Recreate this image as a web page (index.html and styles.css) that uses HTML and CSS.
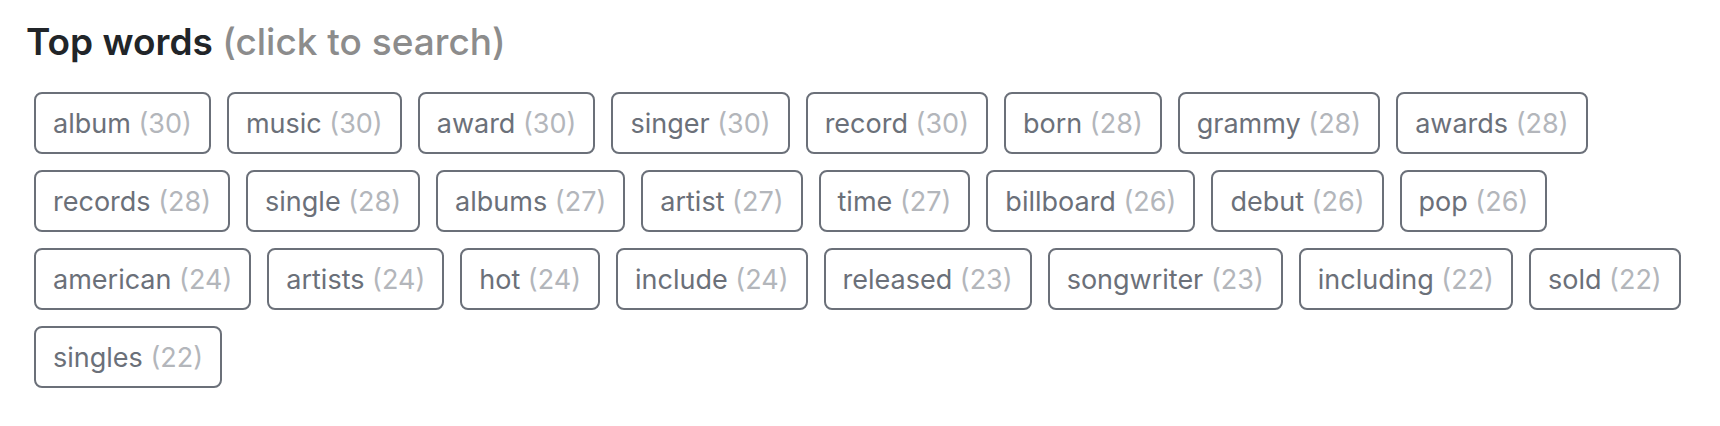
FILE: index.html
```html
<!DOCTYPE html>
<html>
<head>
<meta charset="utf-8">
<link rel="stylesheet" href="styles.css">
</head>
<body>
<div class="panel">
  <h2 class="title">Top words <span class="hint">(click to search)</span></h2>
  <div class="words">
    <button class="word">album <span class="count">(30)</span></button>
    <button class="word">music <span class="count">(30)</span></button>
    <button class="word">award <span class="count">(30)</span></button>
    <button class="word">singer <span class="count">(30)</span></button>
    <button class="word">record <span class="count">(30)</span></button>
    <button class="word">born <span class="count">(28)</span></button>
    <button class="word">grammy <span class="count">(28)</span></button>
    <button class="word">awards <span class="count">(28)</span></button>
    <button class="word">records <span class="count">(28)</span></button>
    <button class="word">single <span class="count">(28)</span></button>
    <button class="word">albums <span class="count">(27)</span></button>
    <button class="word">artist <span class="count">(27)</span></button>
    <button class="word">time <span class="count">(27)</span></button>
    <button class="word">billboard <span class="count">(26)</span></button>
    <button class="word">debut <span class="count">(26)</span></button>
    <button class="word">pop <span class="count">(26)</span></button>
    <button class="word">american <span class="count">(24)</span></button>
    <button class="word">artists <span class="count">(24)</span></button>
    <button class="word">hot <span class="count">(24)</span></button>
    <button class="word">include <span class="count">(24)</span></button>
    <button class="word">released <span class="count">(23)</span></button>
    <button class="word">songwriter <span class="count">(23)</span></button>
    <button class="word">including <span class="count">(22)</span></button>
    <button class="word">sold <span class="count">(22)</span></button>
    <button class="word">singles <span class="count">(22)</span></button>
  </div>
</div>
</body>
</html>
```
FILE: styles.css
```css
html, body {
  margin: 0;
  padding: 0;
  background: #ffffff;
}
body {
  font-family: Inter, "Liberation Sans", sans-serif;
}
.panel {
  padding: 20px 26px 0 26px;
}
.title {
  margin: 0 0 28px 0;
  font-size: 37px;
  line-height: 44px;
  font-weight: 600;
  color: #212529;
}
.hint {
  font-weight: 500;
  color: #8c8c8c;
}
.words {
  display: flex;
  flex-wrap: wrap;
  gap: 16px 16px;
  padding-left: 8px;
}
.word {
  box-sizing: border-box;
  height: 62px;
  padding: 0 17px;
  border: 2px solid #6b7079;
  border-radius: 8px;
  background: #ffffff;
  font-family: Inter, "Liberation Sans", sans-serif;
  font-size: 27px;
  color: #6b7079;
  display: inline-flex;
  align-items: center;
  white-space: pre;
}
.count {
  color: #b3b6bb;
}
```
